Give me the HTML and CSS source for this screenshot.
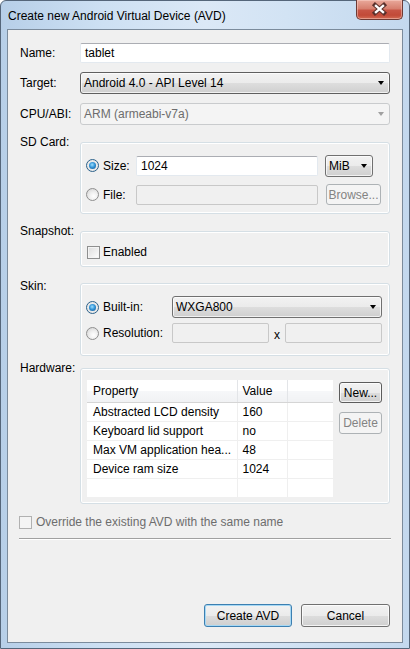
FILE: index.html
```html
<!DOCTYPE html>
<html>
<head>
<meta charset="utf-8">
<title>Create new Android Virtual Device (AVD)</title>
<link rel="stylesheet" href="styles.css">
</head>
<body>
<div class="window">
  <div class="titlebar">
    <span class="title">Create new Android Virtual Device (AVD)</span>
    <div class="close">
      <svg width="47" height="20" viewBox="0 0 47 20">
        <path d="M19.5 6 L28.5 14 M28.5 6 L19.5 14" stroke="#5a302b" stroke-width="4.6" stroke-linecap="square" fill="none"/>
        <path d="M19.5 6 L28.5 14 M28.5 6 L19.5 14" stroke="#ffffff" stroke-width="2.4" fill="none"/>
      </svg>
    </div>
  </div>
  <div class="client">
    <div class="row r-name"><span class="lbl">Name:</span><div class="input wide">tablet</div></div>
    <div class="row r-target"><span class="lbl">Target:</span><div class="combo wide focus">Android 4.0 - API Level 14<i class="arrow"></i></div></div>
    <div class="row r-cpu"><span class="lbl">CPU/ABI:</span><div class="combo wide disabled">ARM (armeabi-v7a)<i class="arrow"></i></div></div>

    <div class="row grp r-sd"><span class="lbl">SD Card:</span>
      <div class="group sd">
        <div class="opt"><span class="radio on"></span>Size:</div>
        <div class="input">1024</div>
        <div class="combo mib">MiB<i class="arrow"></i></div>
        <div class="opt"><span class="radio"></span>File:</div>
        <div class="input disabled"></div>
        <div class="button disabled browse">Browse...</div>
      </div>
    </div>

    <div class="row grp r-snap"><span class="lbl">Snapshot:</span>
      <div class="group snap">
        <div class="opt"><span class="check"></span>Enabled</div>
      </div>
    </div>

    <div class="row grp r-skin"><span class="lbl skinlbl">Skin:</span>
      <div class="group skin">
        <div class="opt"><span class="radio on"></span>Built-in:</div>
        <div class="combo">WXGA800<i class="arrow"></i></div>
        <div class="opt"><span class="radio"></span>Resolution:</div>
        <div class="res">
          <div class="input disabled"></div>
          <span class="xsep">x</span>
          <div class="input disabled"></div>
        </div>
      </div>
    </div>

    <div class="row grp r-hw"><span class="lbl">Hardware:</span>
      <div class="group hw">
        <table class="props">
          <thead>
            <tr><th class="c1">Property</th><th class="c2">Value</th><th class="c3"></th></tr>
          </thead>
          <tbody>
            <tr><td>Abstracted LCD density</td><td>160</td><td></td></tr>
            <tr><td>Keyboard lid support</td><td>no</td><td></td></tr>
            <tr><td>Max VM application hea...</td><td>48</td><td></td></tr>
            <tr><td>Device ram size</td><td>1024</td><td></td></tr>
            <tr><td></td><td></td><td></td></tr>
          </tbody>
        </table>
        <div class="hwbtns">
          <div class="button small hover">New...</div>
          <div class="button small disabled">Delete</div>
        </div>
      </div>
    </div>

    <div class="override"><span class="check disabled"></span>Override the existing AVD with the same name</div>
    <div class="separator"></div>

    <div class="actions">
      <div class="button default">Create AVD</div>
      <div class="button">Cancel</div>
    </div>
  </div>
</div>
</body>
</html>
```

FILE: styles.css
```css
* { box-sizing: border-box; }

html, body {
  margin: 0;
  padding: 0;
}

body {
  width: 410px;
  height: 649px;
  overflow: hidden;
  font-family: "Liberation Sans", Arial, sans-serif;
  font-size: 12px;
  color: #000;
  background: #ffffff;
}

.window {
  width: 410px;
  height: 649px;
  display: flex;
  flex-direction: column;
  border: 1px solid #55667a;
  border-radius: 6px 6px 0 0;
  background: linear-gradient(90deg, #b7cfe8 0%, #cde0f3 25%, #dbe8f6 50%, #d2e3f4 70%, #c3d8ee 100%);
}

.titlebar {
  height: 28px;
  flex: none;
  display: flex;
  align-items: center;
  padding-left: 7px;
}

.title {
  font-size: 12px;
  color: #000;
  padding-top: 1px;
}

.close {
  margin-left: auto;
  margin-right: 6px;
  align-self: flex-start;
  margin-top: -1px;
  width: 47px;
  height: 20px;
  border: 1px solid #6d3a34;
  border-top: none;
  border-radius: 0 0 5px 5px;
  background: linear-gradient(180deg, #e9a99b 0%, #d7806f 45%, #c75444 55%, #c24a38 80%, #d26b53 100%);
  box-shadow: inset 0 0 0 1px rgba(255, 220, 210, 0.45);
  display: flex;
}

.close svg { display: block; margin: -1px 0 0 -1px; }

.client {
  flex: 1;
  margin: 0 6px 5px 6px;
  border: 1px solid #7b8b9c;
  background: #f0f0f0;
  padding: 13px 12px 15px 12px;
  display: flex;
  flex-direction: column;
}

.row {
  display: flex;
  align-items: center;
}

.row.grp { align-items: flex-start; }

.lbl {
  width: 60px;
  flex: none;
  line-height: 16px;
}

.r-target, .r-cpu, .r-sd { margin-top: 9px; }
.r-snap { margin-top: 9px; }
.r-skin { margin-top: 8px; }
.r-hw { margin-top: 4px; }
.skinlbl { padding-top: 3px; }

.wide { width: 310px; }

/* text inputs */
.input {
  height: 20px;
  background: #fff;
  border: 1px solid #e3e9ef;
  border-top-color: #abadb3;
  border-radius: 2px;
  padding-left: 4px;
  display: flex;
  align-items: center;
}

.input.disabled {
  background: #f0f0f0;
  border-color: #c8c8c8;
}

/* combo boxes */
.combo {
  height: 22px;
  display: flex;
  align-items: center;
  padding-left: 3px;
  border: 1px solid #707070;
  border-radius: 3px;
  background: linear-gradient(180deg, #f2f2f2 0%, #ebebeb 50%, #dddddd 51%, #cfcfcf 100%);
  box-shadow: inset 0 0 0 1px rgba(255, 255, 255, 0.7);
}

.combo.focus { border-color: #5f5f5f; }

.combo.disabled {
  background: #f4f4f4;
  border-color: #c9cbcd;
  box-shadow: none;
  color: #6d6d6d;
}

.arrow {
  margin-left: auto;
  margin-right: 5px;
  width: 0;
  height: 0;
  border-left: 3.5px solid transparent;
  border-right: 3.5px solid transparent;
  border-top: 4px solid #000;
}

.combo.disabled .arrow { border-top-color: #a0a0a0; }

/* buttons */
.button {
  height: 23px;
  display: flex;
  align-items: center;
  justify-content: center;
  border: 1px solid #707070;
  border-radius: 3px;
  background: linear-gradient(180deg, #f2f2f2 0%, #ebebeb 50%, #dddddd 51%, #cfcfcf 100%);
  box-shadow: inset 0 0 0 1px rgba(255, 255, 255, 0.75);
}

.button.disabled {
  background: #f4f4f4;
  border-color: #adb2b5;
  box-shadow: none;
  color: #838383;
}

.button.default {
  border-color: #3c7fb1;
  box-shadow: inset 0 0 0 1px #a6d8f4;
}

/* groups */
.group {
  margin-top: 8px;
  width: 310px;
  border: 1px solid #d5dfe5;
  border-radius: 3px;
  box-shadow: inset 0 0 0 1px #ffffff;
}

.opt {
  display: flex;
  align-items: center;
  line-height: 16px;
}

.radio {
  width: 13px;
  height: 13px;
  flex: none;
  border-radius: 50%;
  border: 1px solid #8f8f8f;
  background: radial-gradient(circle at 60% 65%, #ffffff 0%, #f0f0f0 40%, #cfcfcf 100%);
  margin-right: 4px;
  position: relative;
}

.radio.on {
  border-color: #2c628b;
  background: radial-gradient(circle at 50% 50%, #f4f4f4 0%, #e2e2e2 100%);
}

.radio.on::after {
  content: "";
  position: absolute;
  left: 2px;
  top: 2px;
  width: 7px;
  height: 7px;
  border-radius: 50%;
  background: radial-gradient(circle at 45% 40%, #9fe0ff 0%, #3596d8 45%, #0c4d8a 100%);
}

.check {
  width: 13px;
  height: 13px;
  flex: none;
  border: 1px solid #8e8f8f;
  background: linear-gradient(135deg, #dcdcdc 0%, #f0f0f0 60%, #ffffff 100%);
  box-shadow: inset 0 0 0 1px #f4f4f4;
  margin-right: 3px;
}

.check.disabled {
  border-color: #b1b1b1;
  background: #f4f4f4;
  box-shadow: none;
}

/* SD Card group */
.sd {
  height: 72px;
  padding: 11px 0 0 5px;
  display: grid;
  grid-template-columns: 43px 182px auto;
  grid-template-rows: 23px 21px;
  row-gap: 7px;
  column-gap: 7px;
  align-items: center;
}

.sd .input { width: 182px; }
.mib { width: 48px; }
.browse { width: 55px; height: 21px; margin-left: 1px; }

/* Snapshot group */
.snap {
  height: 36px;
  padding: 12px 0 0 6px;
}

/* Skin group */
.skin {
  height: 73px;
  padding: 12px 0 0 5px;
  display: grid;
  grid-template-columns: 86px 210px;
  grid-template-rows: 22px 20px;
  row-gap: 5px;
  align-items: center;
}

.res {
  display: flex;
  align-items: center;
}

.res .input { width: 97px; }

.xsep {
  width: 16px;
  text-align: center;
  padding-top: 4px;
}

/* Hardware group */
.hw {
  height: 136px;
  padding: 11px 0 0 6px;
  display: flex;
  align-items: flex-start;
}

.props {
  width: 246px;
  border-collapse: collapse;
  background: #ffffff;
  table-layout: fixed;
}

.props th, .props td {
  padding: 0 0 0 6px;
  text-align: left;
  font-weight: normal;
  white-space: nowrap;
  overflow: hidden;
}

.props th {
  height: 22px;
  background: linear-gradient(180deg, #ffffff 0%, #ffffff 50%, #f6f7f9 51%, #f1f2f4 100%);
  border-bottom: 1px solid #d5d5d5;
  border-right: 1px solid #e3e5e8;
}

.props th.c3 { border-right: none; }
.props .c1 { width: 150px; }
.props .c2 { width: 50px; padding-left: 5px; }
.props td:nth-child(2) { padding-left: 5px; }

.props td {
  height: 19px;
  border-bottom: 1px solid #efefef;
  border-right: 1px solid #efefef;
}

.props td:last-child { border-right: none; }
.props tr:last-child td { border-bottom: none; }

.hwbtns {
  margin-left: 6px;
  margin-top: 2px;
  display: flex;
  flex-direction: column;
  gap: 9px;
}

.button.small { width: 43px; height: 21px; }
.button.small.disabled { height: 22px; }
.button.hover { border-color: #5c5c5c; }

/* bottom */
.override {
  margin-top: 10px;
  margin-left: -1px;
  display: flex;
  align-items: center;
  line-height: 16px;
  color: #6d6d6d;
}

.override .check { margin-right: 4px; }

.separator {
  margin: 8px -1px 0 -1px;
  border-top: 1px solid #a0a0a0;
  border-bottom: 1px solid #ffffff;
}

.actions {
  margin-top: auto;
  display: flex;
  justify-content: flex-end;
  gap: 9px;
}

.actions .button { width: 88px; }
.actions .button:last-child { width: 89px; }
```
